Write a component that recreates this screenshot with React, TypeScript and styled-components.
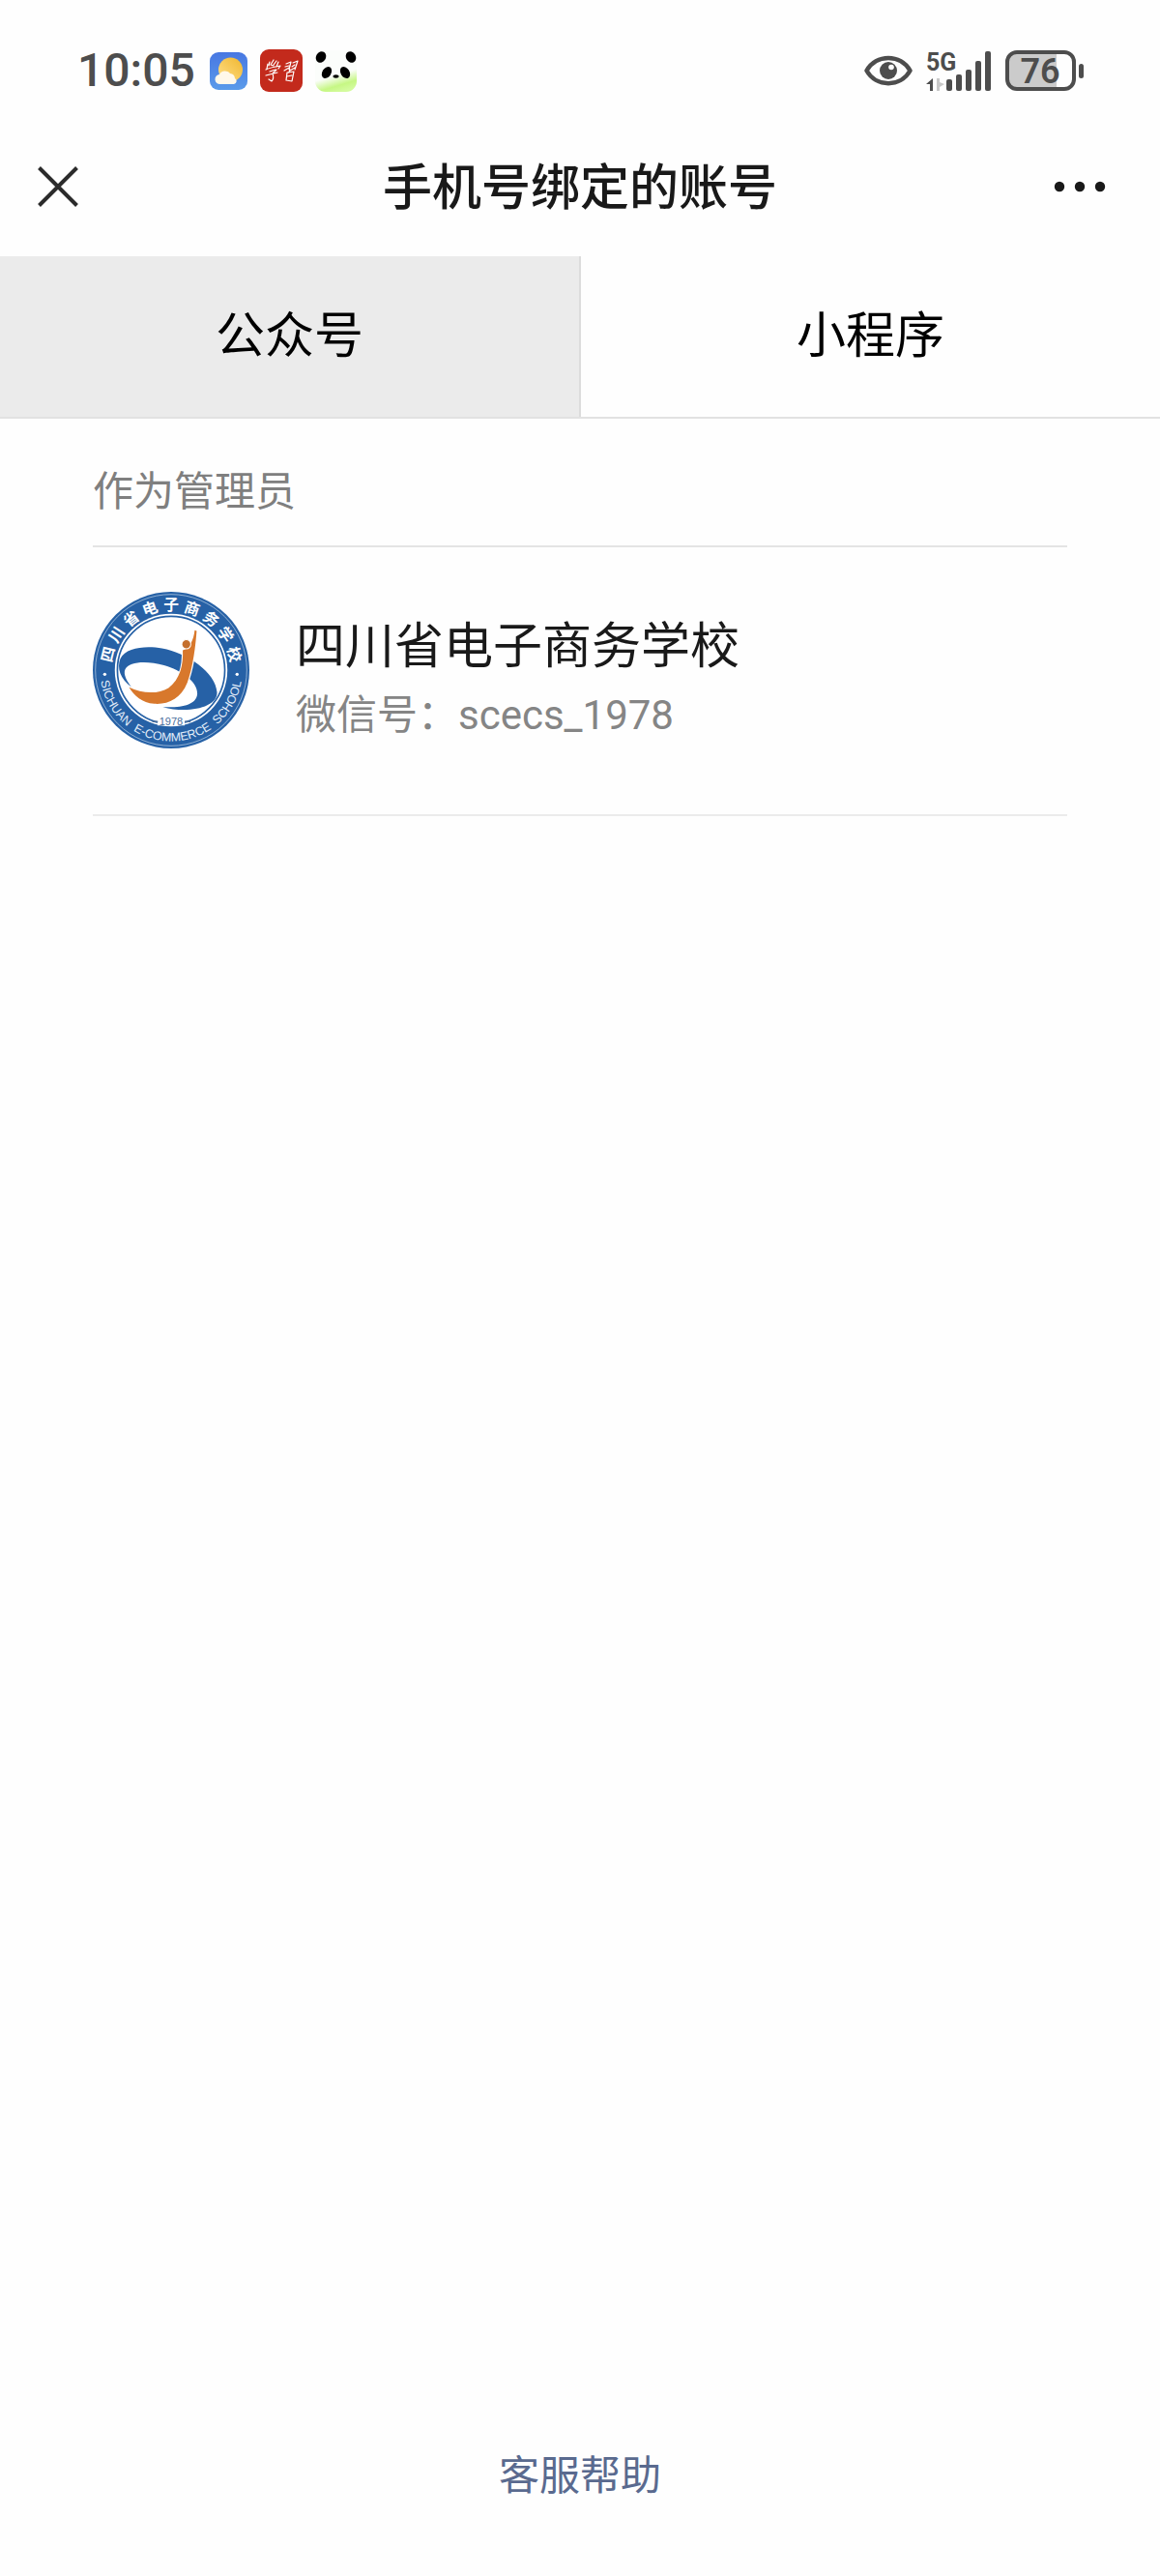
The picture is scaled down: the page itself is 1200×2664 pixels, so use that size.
import React, { useState } from "react";
import styled, { createGlobalStyle } from "styled-components";

const GlobalStyle = createGlobalStyle`
  * { box-sizing: border-box; }
  body {
    margin: 0;
    background: #fefefe;
    color: #191919;
    font-family: "Noto Sans CJK SC", "Noto Sans", sans-serif;
  }
  button { border: 0; padding: 0; background: none; font: inherit; cursor: pointer; }
`;

const Page = styled.div`
  display: flex;
  flex-direction: column;
  min-height: 100vh;
`;

const StatusBar = styled.div`
  display: flex;
  align-items: center;
  justify-content: space-between;
  height: 122px;
  padding: 24px 78px 0 80px;
`;

const StatusGroup = styled.div<{ $gap: number }>`
  display: flex;
  align-items: center;
  gap: ${(p) => p.$gap}px;
`;

const Clock = styled.time`
  margin-right: 2px;
  color: #4d4d4d;
  font: 500 48px/56px Roboto, sans-serif;
`;

const Svg = styled.svg`
  display: block;
  flex: none;
`;

const TitleBar = styled.header`
  display: flex;
  align-items: center;
  justify-content: space-between;
  height: 143px;
  padding: 0 56px 2px 39px;
`;

const Title = styled.h1`
  margin: 0;
  padding-bottom: 6px;
  flex: 1;
  text-align: center;
  font-size: 51px;
  font-weight: 500;
  line-height: 72px;
`;

const IconButton = styled.button<{ $side: "left" | "right" }>`
  display: flex;
  align-items: center;
  justify-content: ${(p) => (p.$side === "left" ? "flex-start" : "flex-end")};
  width: ${(p) => (p.$side === "left" ? 97 : 80)}px;
  height: 100px;
`;

const Tabs = styled.div`
  display: flex;
  height: 168px;
  border-bottom: 2px solid #e2e2e2;
`;

const Tab = styled.button<{ $active: boolean }>`
  flex: 1;
  padding-bottom: 10px;
  color: #000;
  font-size: 51px;
  line-height: 72px;
  background: ${(p) => (p.$active ? "#ebebeb" : "transparent")};

  &:first-child { border-right: 2px solid #dcdcdc; }
`;

const Content = styled.main`
  padding: 0 8%;
`;

const SectionTitle = styled.h2`
  margin: 0;
  padding: 42px 0 29px;
  border-bottom: 2px solid #e4e4e4;
  color: #7f7f7f;
  font-size: 42px;
  font-weight: 400;
  line-height: 60px;
`;

const Account = styled.a`
  display: flex;
  gap: 48px;
  padding: 46px 0 66px;
  border-bottom: 2px solid #ebebeb;
  color: inherit;
  text-decoration: none;
`;

const AccountText = styled.div`
  padding-top: 16px;
`;

const AccountName = styled.div`
  font-size: 51px;
  line-height: 72px;
`;

const AccountId = styled.div`
  color: #858585;
  font-size: 42px;
  line-height: 72px;
`;

const Handle = styled.span`
  font-family: Roboto, sans-serif;
`;

const Footer = styled.footer`
  margin-top: auto;
  padding-bottom: 77px;
  text-align: center;
`;

const HelpLink = styled.a`
  color: #5a6a8f;
  font-size: 42px;
  line-height: 60px;
  text-decoration: none;
`;

const WeatherIcon = () => (
  <Svg width="39" height="39" viewBox="0 0 39 39" aria-hidden="true">
    <defs>
      <linearGradient id="sky" x1="0" y1="0" x2="0" y2="1">
        <stop offset="0" stopColor="#4777e2" />
        <stop offset="1" stopColor="#5b9bea" />
      </linearGradient>
      <linearGradient id="sun" x1="1" y1="0" x2="0" y2="1">
        <stop offset="0" stopColor="#f0b62f" />
        <stop offset="1" stopColor="#ffe08a" />
      </linearGradient>
    </defs>
    <rect width="39" height="39" rx="9" fill="url(#sky)" />
    <circle cx="21.500" cy="18" r="12.500" fill="url(#sun)" />
    <path d="M11 33a5 5 0 0 1-1-10 6.500 6.500 0 0 1 11-1 5.500 5.500 0 0 1 5 5 3.200 3.200 0 0 1-1 6z" fill="#fff8ea" />
  </Svg>
);

const StudyIcon = () => (
  <Svg width="44" height="44" viewBox="0 0 44 44" aria-hidden="true">
    <rect width="44" height="44" rx="9" fill="#c32a1c" />
    <g fill="none" stroke="#fff" strokeWidth="1.200" strokeLinecap="round" strokeLinejoin="round">
      <path d="M10 13l-1 4M14 11l-3 5 3 1M17 12l-3 4M8 15l-1 5M19 13l-2 5M6 21c4-2 9-3 15-4l-2 3M10 23c3-1 5-2 7-2l-4 4c1 3 1 6-1 8l-3-2M6 27c4-1 8-2 12-3" />
      <path d="M27 15l5-2-2 8M26 18l4-1M25 22l5-3M34 14l5-2-3 9M33 18l3-2M31 22l5-3M28 24l7-1-2 10-6-1 1-8M28 28l5-1M31 21l-1 3" />
    </g>
  </Svg>
);

const PandaIcon = () => (
  <Svg width="44" height="44" viewBox="0 0 44 44" aria-hidden="true">
    <defs>
      <linearGradient id="grass" x1="0.300" y1="0" x2="0.600" y2="1">
        <stop offset="0.600" stopColor="#fbfdfb" />
        <stop offset="0.850" stopColor="#c6f784" />
        <stop offset="1" stopColor="#d3fb9d" />
      </linearGradient>
    </defs>
    <rect y="1" width="43" height="43" rx="11" fill="url(#grass)" />
    <ellipse cx="6" cy="8" rx="5" ry="6" transform="rotate(30 6 8)" />
    <ellipse cx="37" cy="8" rx="5" ry="6" transform="rotate(-30 37 8)" />
    <ellipse cx="12" cy="24" rx="4.500" ry="6.500" transform="rotate(32 12 24)" />
    <ellipse cx="31" cy="24" rx="4.500" ry="6.500" transform="rotate(-32 31 24)" />
    <ellipse cx="21.500" cy="28" rx="3" ry="1.700" />
  </Svg>
);

const EyeIcon = () => (
  <Svg width="50" height="32" viewBox="0 0 50 32" aria-hidden="true">
    <path d="M2.500 16C12-1.500 38-1.500 47.500 16 38 33.500 12 33.500 2.500 16z" fill="none" stroke="#4d4d4d" strokeWidth="4.500" strokeLinejoin="round" />
    <circle cx="25" cy="16" r="9" fill="#4d4d4d" />
    <circle cx="28" cy="12.500" r="2.800" fill="#fff" />
  </Svg>
);

const SignalIcon = () => (
  <Svg width="68" height="57" viewBox="0 -8 68 57" role="img" aria-label="5G">
    <text x="0" y="20" fill="#4d4d4d" fontFamily="Roboto, sans-serif" fontSize="25" fontWeight="700">5G</text>
    <path d="M7 28v13H4v-7H0z" fill="#4d4d4d" />
    <path d="M11 28v13h3v-4l5-3-5-2v-4z" fill="#c8c8c8" />
    <g fill="#4d4d4d">
      <rect x="21" y="29" width="6" height="12" rx="2" />
      <rect x="31" y="24" width="6" height="17" rx="2" />
      <rect x="41" y="19" width="6" height="22" rx="2" />
      <rect x="51" y="10" width="6" height="31" rx="2" />
      <rect x="61" y="0" width="6" height="41" rx="2" />
    </g>
  </Svg>
);

const BatteryIcon = () => (
  <Svg width="82" height="42" viewBox="0 0 82 42" role="img" aria-label="76%">
    <path d="M53 2v38H12A10 10 0 0 1 2 30V12A10 10 0 0 1 12 2z" fill="#cbcbcb" />
    <rect x="2" y="2" width="69" height="38" rx="10" fill="none" stroke="#4d4d4d" strokeWidth="4" />
    <rect x="76" y="14" width="5" height="15" rx="2.500" fill="#4d4d4d" />
    <text x="36" y="34" textAnchor="middle" fill="#4d4d4d" fontFamily="Roboto, sans-serif" fontSize="36" fontWeight="600">76</text>
  </Svg>
);

const CloseIcon = () => (
  <Svg width="42" height="42" viewBox="0 0 42 42" aria-hidden="true">
    <path d="M1.500 1.500l39 39M40.500 1.500l-39 39" stroke="#2b2b2b" strokeWidth="4" />
  </Svg>
);

const MoreIcon = () => (
  <Svg width="54" height="12" viewBox="0 0 54 12" fill="#191919" aria-hidden="true">
    <circle cx="6" cy="6" r="5.200" />
    <circle cx="27" cy="6" r="5.200" />
    <circle cx="48" cy="6" r="5.200" />
  </Svg>
);

const SchoolBadge = () => (
  <Svg width="162" height="162" viewBox="48 37 484 484" role="img" aria-label="四川省电子商务学校">
    <defs>
      <path id="lowerArc" d="M70 279A220 220 0 0 0 510 279" />
    </defs>
    <circle cx="290" cy="279" r="242" fill="#2661a6" />
    <circle cx="290" cy="279" r="234" fill="none" stroke="#c3d6ea" strokeWidth="2" />
    <circle cx="290" cy="279" r="174" fill="#fff" />
    <circle cx="290" cy="279" r="166" fill="none" stroke="#2661a6" strokeWidth="5" />
    <g fill="#fff" fontFamily="'Noto Sans CJK SC', sans-serif" fontSize="47" fontWeight="700" textAnchor="middle">
      {Array.from("四川省电子商务学校").map((char, i) => (
        <text key={char} x="290" y="95" transform={`rotate(${(i - 4) * 19} 290 279)`}>{char}</text>
      ))}
    </g>
    <g fill="#e3eefa" fontFamily="'Liberation Sans', sans-serif" fontSize="37">
      <text><textPath href="#lowerArc" startOffset="34">SICHUAN</textPath></text>
      <text><textPath href="#lowerArc" startOffset="222">E-COMMERCE</textPath></text>
      <text><textPath href="#lowerArc" startOffset="499">SCHOOL</textPath></text>
    </g>
    <circle cx="85" cy="292" r="5" fill="#fff" />
    <circle cx="494" cy="292" r="5" fill="#fff" />
    <path
      d="M168 332C132 306 122 272 133 244C150 208 215 203 262 212C340 226 428 286 432 348C434 396 340 414 264 393C318 396 368 388 371 352C372 314 322 280 268 264C215 250 160 252 148 277C141 292 154 315 168 332z"
      fill="#2661a6"
    />
    <path
      d="M160 332C200 352 250 354 282 334C318 308 328 262 326 218C348 212 360 184 363 156L369 158C366 200 358 270 340 318C320 368 280 386 238 383C200 380 176 358 160 332z"
      fill="#d8782c" stroke="#fff" strokeWidth="7" strokeLinejoin="round" paintOrder="stroke"
    />
    <circle cx="337" cy="199" r="14" fill="#c46f2d" stroke="#fff" strokeWidth="3" />
    <rect x="248" y="424" width="84" height="26" fill="#fff" />
    <text x="290" y="448" textAnchor="middle" fill="#4b6f9c" fontFamily="'Liberation Sans', sans-serif" fontSize="33">1978</text>
    <path d="M232 438h17M332 438h18" stroke="#4b6f9c" strokeWidth="4" />
  </Svg>
);

const TAB_NAMES = ["公众号", "小程序"];

export default function App() {
  const [active, setActive] = useState(0);

  return (
    <Page>
      <GlobalStyle />
      <StatusBar>
        <StatusGroup $gap={13}>
          <Clock>10:05</Clock>
          <WeatherIcon />
          <StudyIcon />
          <PandaIcon />
        </StatusGroup>
        <StatusGroup $gap={14}>
          <EyeIcon />
          <SignalIcon />
          <BatteryIcon />
        </StatusGroup>
      </StatusBar>
      <TitleBar>
        <IconButton $side="left" aria-label="关闭"><CloseIcon /></IconButton>
        <Title>手机号绑定的账号</Title>
        <IconButton $side="right" aria-label="更多"><MoreIcon /></IconButton>
      </TitleBar>
      <Tabs role="tablist">
        {TAB_NAMES.map((name, i) => (
          <Tab key={name} role="tab" aria-selected={active === i} $active={active === i} onClick={() => setActive(i)}>
            {name}
          </Tab>
        ))}
      </Tabs>
      <Content>
        <SectionTitle>作为管理员</SectionTitle>
        <Account href="#account">
          <SchoolBadge />
          <AccountText>
            <AccountName>四川省电子商务学校</AccountName>
            <AccountId>微信号：<Handle>scecs_1978</Handle></AccountId>
          </AccountText>
        </Account>
      </Content>
      <Footer>
        <HelpLink href="#help">客服帮助</HelpLink>
      </Footer>
    </Page>
  );
}
